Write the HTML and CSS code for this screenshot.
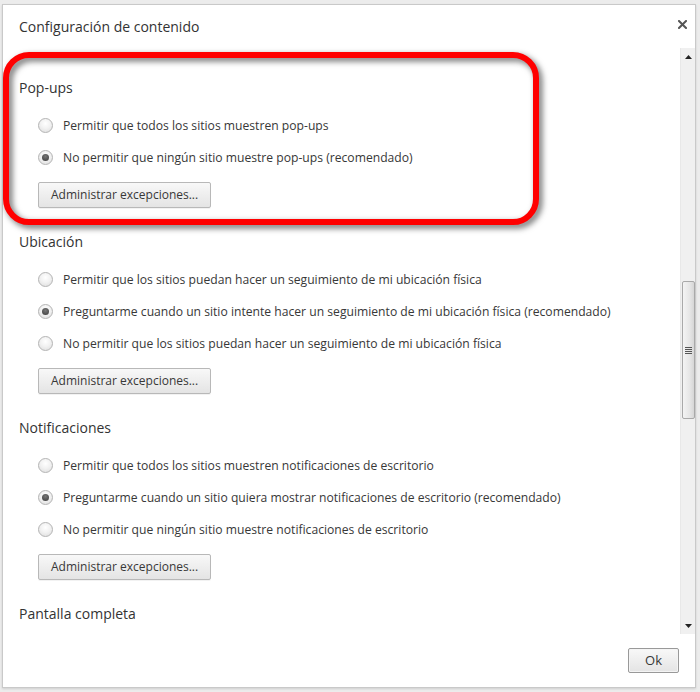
FILE: index.html
```html
<!DOCTYPE html>
<html lang="es">
<head>
<meta charset="utf-8">
<title>Configuración de contenido</title>
<link rel="stylesheet" href="styles.css">
</head>
<body>
<div class="dialog">
  <div class="dlg-header">
    <div class="dlg-title">Configuración de contenido</div>
    <div class="close">
      <svg width="9" height="9" viewBox="0 0 9 9"><path d="M1 1 L8 8 M8 1 L1 8" stroke="#555" stroke-width="2" stroke-linecap="square"/></svg>
    </div>
  </div>
  <div class="dlg-body">
    <div class="content">
      <section class="group">
        <h2 class="group-title">Pop-ups</h2>
        <ul class="options">
          <li class="option"><span class="radio"></span><span>Permitir que todos los sitios muestren pop-ups</span></li>
          <li class="option"><span class="radio checked"></span><span>No permitir que ningún sitio muestre pop-ups (recomendado)</span></li>
        </ul>
        <button class="btn">Administrar excepciones...</button>
      </section>
      <section class="group">
        <h2 class="group-title">Ubicación</h2>
        <ul class="options">
          <li class="option"><span class="radio"></span><span>Permitir que los sitios puedan hacer un seguimiento de mi ubicación física</span></li>
          <li class="option"><span class="radio checked"></span><span>Preguntarme cuando un sitio intente hacer un seguimiento de mi ubicación física (recomendado)</span></li>
          <li class="option"><span class="radio"></span><span>No permitir que los sitios puedan hacer un seguimiento de mi ubicación física</span></li>
        </ul>
        <button class="btn">Administrar excepciones...</button>
      </section>
      <section class="group">
        <h2 class="group-title">Notificaciones</h2>
        <ul class="options">
          <li class="option"><span class="radio"></span><span>Permitir que todos los sitios muestren notificaciones de escritorio</span></li>
          <li class="option"><span class="radio checked"></span><span>Preguntarme cuando un sitio quiera mostrar notificaciones de escritorio (recomendado)</span></li>
          <li class="option"><span class="radio"></span><span>No permitir que ningún sitio muestre notificaciones de escritorio</span></li>
        </ul>
        <button class="btn">Administrar excepciones...</button>
      </section>
      <section class="group">
        <h2 class="group-title">Pantalla completa</h2>
      </section>
    </div>
    <div class="scrollbar">
      <div class="sb-arrow"><svg width="7" height="4" viewBox="0 0 7 4"><path d="M0 4 L3.5 0 L7 4 Z" fill="#222"/></svg></div>
      <div class="sb-gap"></div>
      <div class="sb-thumb">
        <svg width="7" height="7" viewBox="0 0 7 7"><path d="M0 0.5H7M0 2.5H7M0 4.5H7M0 6.5H7" stroke="#555" stroke-width="1"/></svg>
      </div>
      <div class="sb-rest"></div>
      <div class="sb-arrow"><svg width="7" height="4" viewBox="0 0 7 4"><path d="M0 0 L3.5 4 L7 0 Z" fill="#222"/></svg></div>
    </div>
  </div>
  <div class="dlg-footer">
    <button class="btn btn-ok">Ok</button>
  </div>
</div>
<div class="highlight"></div>
</body>
</html>
```
FILE: styles.css
```css
* { box-sizing: border-box; }
html, body { margin: 0; padding: 0; }
body {
  background: #ececec;
  width: 700px;
  height: 692px;
  position: relative;
  font-family: "Open Sans", "DejaVu Sans", sans-serif;
  color: #333;
  overflow: hidden;
}
.dialog {
  margin: 4px 0 0 2px;
  width: 694px;
  height: 684px;
  background: #fff;
  border: 1px solid #c9c9c9;
  display: flex;
  flex-direction: column;
  box-shadow: 0 1px 2px rgba(0,0,0,0.12);
}
.dlg-header {
  height: 43px;
  flex: none;
  display: flex;
  justify-content: space-between;
  padding: 12px 8px 0 16px;
}
.dlg-title {
  font-size: 14px;
  line-height: 20px;
  color: #333;
}
.close {
  width: 9px;
  height: 9px;
  margin-top: 3px;
  display: flex;
}
.dlg-body {
  height: 586px;
  flex: none;
  display: flex;
}
.content {
  flex: 1;
  overflow: hidden;
  padding: 30px 0 0 16px;
}
.group { margin-bottom: 24px; }
.group-title {
  margin: 0 0 11px 0;
  font-size: 14px;
  font-weight: normal;
  line-height: 20px;
  height: 20px;
  color: #333;
}
.options {
  list-style: none;
  margin: 0;
  padding: 0 0 0 19px;
}
.option {
  height: 32px;
  display: flex;
  align-items: center;
  gap: 10px;
  font-size: 12.15px;
  color: #383838;
}
.radio {
  width: 15px;
  height: 15px;
  flex: none;
  border-radius: 50%;
  border: 1px solid #b4b4b4;
  background: radial-gradient(circle at 50% 35%, #ffffff 0%, #f2f2f2 45%, #dcdcdc 100%);
  display: flex;
  align-items: center;
  justify-content: center;
}
.radio.checked::after {
  content: "";
  width: 7px;
  height: 7px;
  border-radius: 50%;
  background: radial-gradient(circle at 50% 35%, #777 0%, #3a3a3a 100%);
}
.btn {
  font-family: "Open Sans", "DejaVu Sans", sans-serif;
  font-size: 12px;
  color: #383838;
  background: linear-gradient(#f8f8f8, #e4e4e4);
  border: 1px solid #b8b8b8;
  border-radius: 2px;
  height: 26px;
  padding: 0 12px;
  margin: 9px 0 0 19px;
  line-height: 22px;
  box-shadow: 0 1px 0 rgba(0,0,0,0.05);
}
.scrollbar {
  width: 15px;
  flex: none;
  background: #f0f0f0;
  border-left: 1px solid #e8e8e8;
  display: flex;
  flex-direction: column;
}
.sb-arrow {
  height: 17px;
  flex: none;
  display: flex;
  align-items: center;
  justify-content: center;
}
.sb-gap { height: 216px; flex: none; }
.sb-thumb {
  height: 138px;
  flex: none;
  margin: 0 0 0 1px;
  border: 1px solid #a9a9a9;
  border-radius: 2px;
  background: linear-gradient(to right, #f4f4f4, #e6e6e6 60%, #d6d6d6);
  display: flex;
  align-items: center;
  justify-content: center;
}
.sb-rest { flex: 1; }
.dlg-footer {
  flex: 1;
  display: flex;
  justify-content: flex-end;
  align-items: flex-start;
  padding: 14px 16px 0 0;
}
.btn-ok {
  margin: 0;
  width: 51px;
  height: 25px;
  padding: 0;
  font-size: 13px;
  line-height: 21px;
  border-color: #999;
  box-shadow: inset 0 0 0 1px #f4f4f4;
}
.highlight {
  position: absolute;
  left: 3px;
  top: 52px;
  width: 536px;
  height: 173px;
  border: 6px solid #ff0000;
  border-radius: 26px;
  filter: drop-shadow(3px 3px 3px rgba(0,0,0,0.6));
  pointer-events: none;
}
```
